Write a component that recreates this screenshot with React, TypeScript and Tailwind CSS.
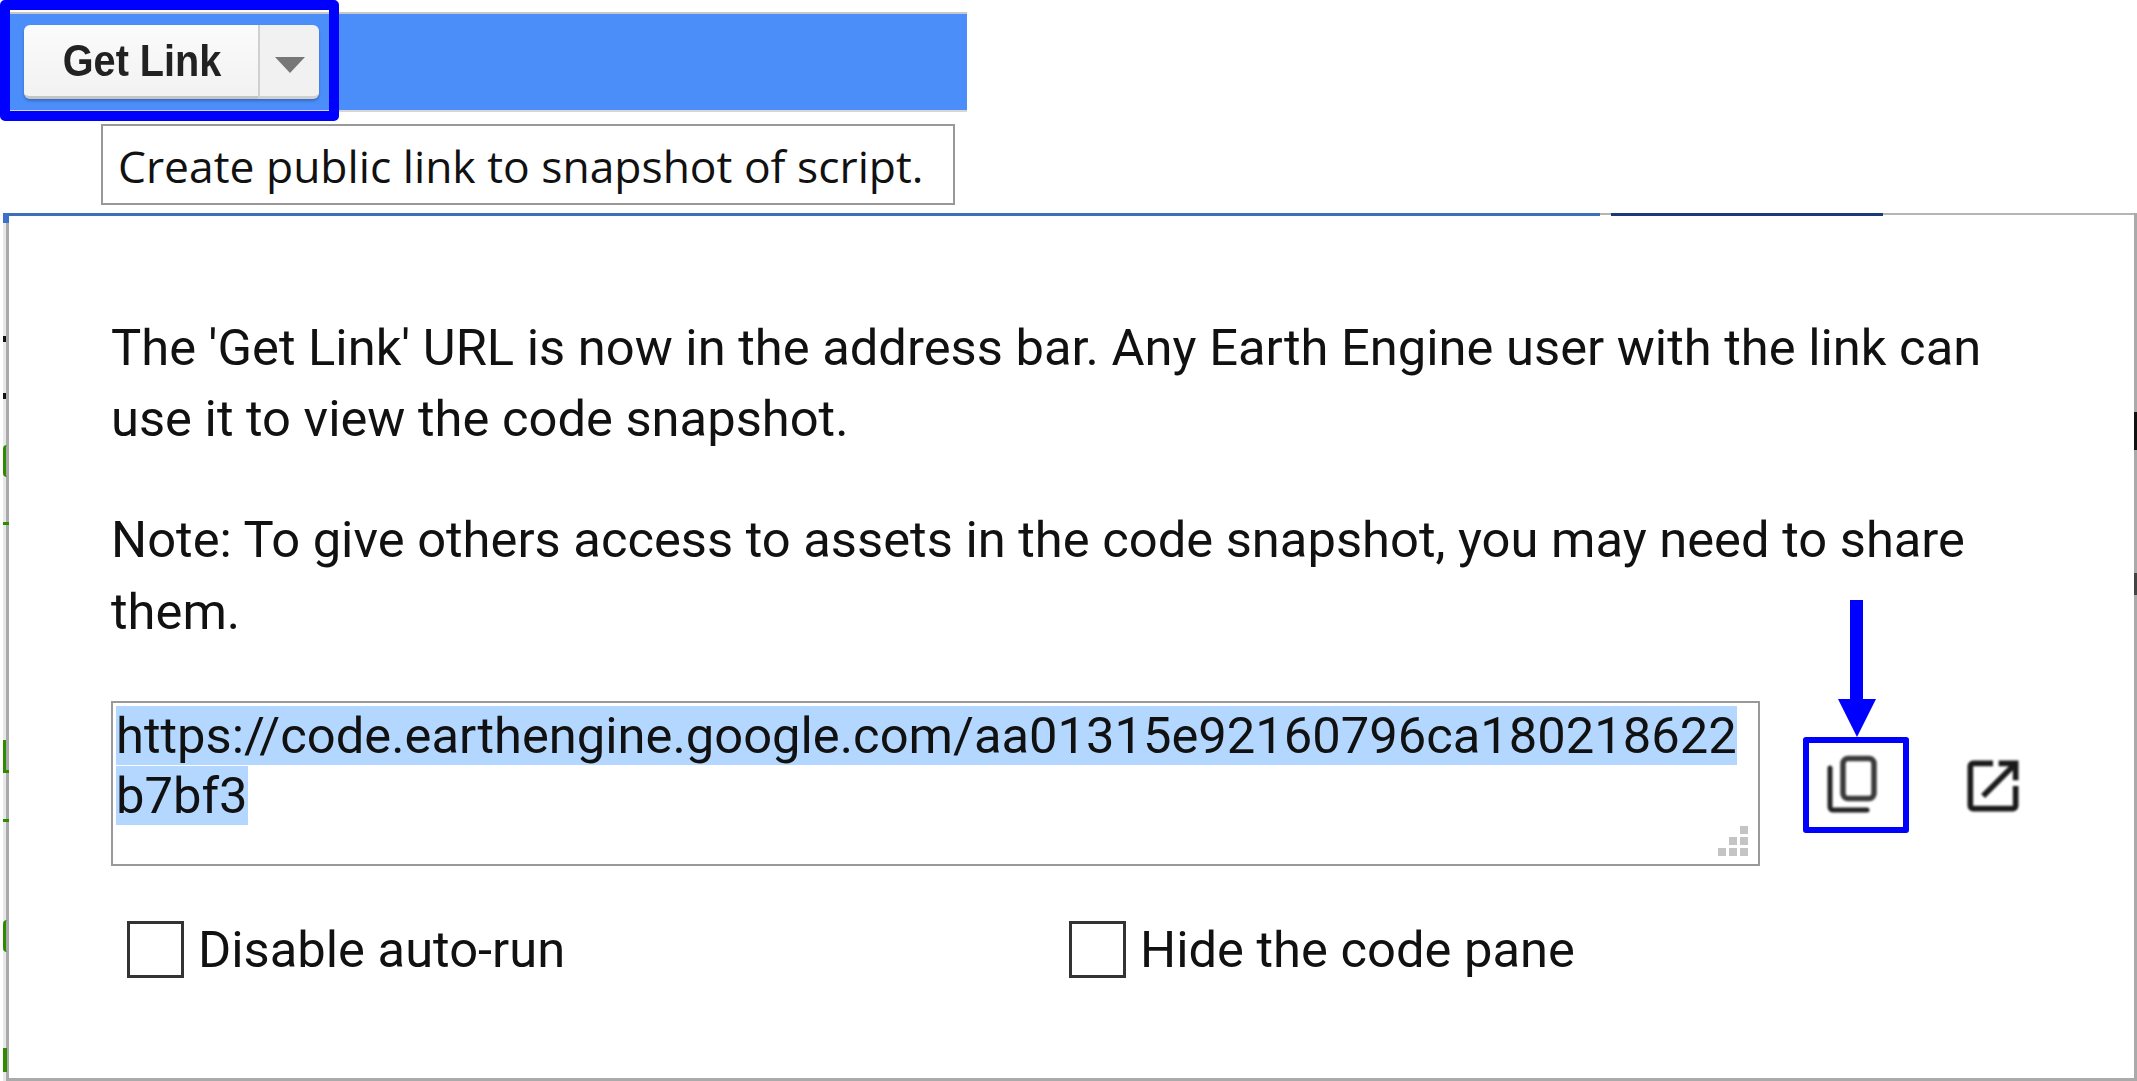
import React from "react";

const roboto = "font-['Roboto',sans-serif]";

const CopyIcon = () => (
  <svg viewBox="0 0 60 60" className="w-[60px] h-[60px] mr-[8px] mb-[2px] blur-[0.8px]" fill="none" stroke="#222">
    <rect x="21" y="4.5" width="31" height="40" rx="5" strokeWidth="5.5" stroke="#3a3a3a" />
    <path d="M8 14V53a3 3 0 0 0 3 3H45" strokeWidth="5" strokeLinecap="round" />
  </svg>
);

const OpenIcon = () => (
  <svg viewBox="0 0 24 24" className="w-[68px] h-[68px] blur-[0.8px]" fill="#1a1a1a">
    <path d="M19 19H5V5h7V3H5a2 2 0 0 0-2 2v14a2 2 0 0 0 2 2h14a2 2 0 0 0 2-2v-7h-2zM14 3v2h3.6l-9.8 9.8 1.4 1.4L19 6.4V10h2V3z" />
  </svg>
);

const Grip = () => (
  <div className="absolute right-[10px] bottom-[8px] grid grid-cols-3 gap-[3px]">
    {[0, 0, 1, 0, 1, 1, 1, 1, 1].map((on, i) => (
      <span key={i} className={on ? "w-[8px] h-[8px] bg-[#c4c4c4]" : "w-[8px] h-[8px]"} />
    ))}
  </div>
);

const Check = ({ label, className }: { label: string; className: string }) => (
  <label className={`flex items-center gap-[14px] ${className}`}>
    <input type="checkbox" className="appearance-none w-[57px] h-[57px] border-[3px] border-[#333] bg-white" />
    <span className="text-[50.7px] leading-[57px] text-[#111]">{label}</span>
  </label>
);

// the editor behind the dialog shows through along its left edge
const LeftEdge = () => (
  <div className="w-[6px] h-full flex flex-col bg-[linear-gradient(to_right,#e8e8e8_50%,#aaaaaa_50%)]">
    <div className="h-[10px] bg-[#3b72c9]" />
    <div className="mt-[113px] w-[3px] h-[6px] bg-[#111]" />
    <div className="mt-[51px] w-[3px] h-[6px] bg-[#111]" />
    <div className="mt-[46px] h-[32px] border-l-[3px] border-[#2e8b00] rounded-l-[4px]" />
    <div className="mt-[45px] h-[3px] bg-[#2e8b00]" />
    <div className="mt-[215px] h-[33px] border-l-[3px] border-b-[3px] border-[#2e8b00]" />
    <div className="mt-[46px] h-[3px] bg-[#2e8b00]" />
    <div className="mt-[98px] h-[32px] border-l-[3px] border-[#2e8b00] rounded-l-[4px]" />
    <div className="mt-[96px] w-[4px] h-[24px] bg-[#2e8b00]" />
  </div>
);

const RightEdge = () => (
  <div className="w-[3px] h-full flex flex-col bg-[#aaaaaa]">
    <div className="mt-[199px] h-[38px] bg-[#111]" />
    <div className="mt-[123px] h-[22px] bg-[#444]" />
  </div>
);

export default function App() {
  return (
    <div className={`w-[2137px] h-[1081px] overflow-hidden bg-white ${roboto}`}>
      {/* toolbar, the blue outline is the annotation round the button */}
      <div className="relative pt-[12px] h-[112px]">
        <div className="ml-[5px] w-[962px] h-[100px] bg-[#4b8efa] border-t-2 border-b-2 border-t-[#c8c8c8] border-b-[#d6d6d6] pl-[19px] pt-[11px]">
          <div className="flex h-[74px] shadow-[0_2px_3px_rgba(0,0,0,0.25)] rounded-[6px] w-[295px]">
            <button className="w-[234px] h-full rounded-l-[6px] bg-gradient-to-b from-[#fbfbfb] to-[#f2f2f2] border-b-[3px] border-[#c4c4c4] pl-[2px] font-['Liberation_Sans',sans-serif] font-bold text-[44px] text-[#222]">
              <span className="inline-block scale-x-[0.9] mt-[-4px]">Get Link</span>
            </button>
            <div className="w-[61px] h-full rounded-r-[6px] bg-[#f1f1f1] border-l-2 border-b-[3px] border-[#d0d0d0] flex items-center justify-center">
              <span className="mt-[8px] border-x-[15px] border-x-transparent border-t-[16px] border-t-[#777]" />
            </div>
          </div>
        </div>
        <div className="absolute left-0 top-0 w-[339px] h-[121px] rounded-[5px] border-[10px] border-[#0000ff]" />
      </div>

      {/* tooltip */}
      <div className="ml-[101px] mt-[12px] w-[854px] h-[81px] border-2 border-[#999] flex items-center pl-[15px] pt-[3px] font-['Open_Sans',sans-serif] text-[44.4px] text-[#111] whitespace-nowrap">
        Create public link to snapshot of script.
      </div>

      {/* dialog */}
      <div className="flex h-[868px] mt-[8px] pl-[3px]">
        <LeftEdge />
        <div className="relative flex-1 border-b-[3px] border-[#aaaaaa] pl-[102px] pt-[99px]">
          <div className="absolute top-0 left-0 right-0 h-[2px] bg-[#b5b5b5]" />
          <div className="absolute top-0 left-0 w-[1591px] h-[3px] bg-[#3b6fb8]" />
          <div className="absolute top-0 left-[1602px] w-[272px] h-[3px] bg-[#1c3a78]" />

          <p className="w-[1900px] text-[50.7px] leading-[71px] text-[#111]">
            The 'Get Link' URL is now in the address bar. Any Earth Engine user with the link can use it to view the code snapshot.
          </p>
          <p className="w-[1900px] mt-[50px] text-[50.7px] leading-[72px] text-[#111]">
            Note: To give others access to assets in the code snapshot, you may need to share them.
          </p>

          <div className="flex items-start mt-[53px]">
            <div className="relative w-[1649px] h-[165px] border-2 border-[#999] pt-[3px] pl-[3px] text-[50.7px] leading-[60px] text-[#111]">
              <span className="bg-[#b3d7ff] break-all">https://code.earthengine.google.com/aa01315e92160796ca180218622b7bf3</span>
              <Grip />
            </div>
            <div className="ml-[43px] mt-[36px] w-[106px] h-[96px] rounded-[3px] border-[6px] border-[#0000ff] flex items-center justify-center">
              <CopyIcon />
            </div>
            <div className="relative ml-[50px] mt-[51px]">
              <OpenIcon />
            </div>
          </div>

          <div className="flex mt-[55px]">
            <Check label="Disable auto-run" className="ml-[16px] w-[942px]" />
            <Check label="Hide the code pane" className="" />
          </div>

          {/* arrow to the copy button */}
          <div className="absolute left-[1828px] top-[387px] flex flex-col items-center w-[39px]">
            <div className="w-[13px] h-[99px] bg-[#0000ff]" />
            <div className="border-x-[19.5px] border-x-transparent border-t-[38px] border-t-[#0000ff]" />
          </div>
        </div>
        <RightEdge />
      </div>
    </div>
  );
}
